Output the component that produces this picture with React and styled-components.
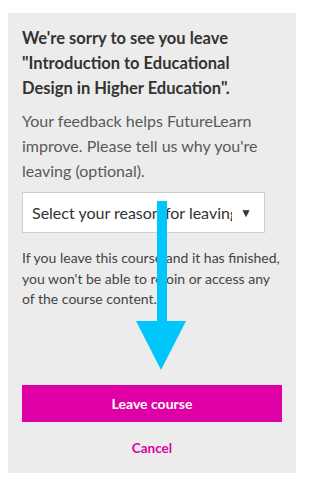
import React from "react";
import styled, { createGlobalStyle } from "styled-components";

const GlobalStyle = createGlobalStyle`
  body {
    margin: 0;
    background: #ffffff;
    font-family: "Lato", "Open Sans", sans-serif;
  }
`;

const Page = styled.div`
  width: 302px;
  box-sizing: border-box;
  padding: 13px 6px 14px 8px;
  position: relative;
`;

const Panel = styled.div`
  background: #ececec;
  width: 288px;
  height: 460px;
  box-sizing: border-box;
  padding: 13px 14px 0 14px;
  display: flex;
  flex-direction: column;
`;

const Title = styled.h2`
  margin: 0;
  max-width: 238px;
  font-size: 16.5px;
  line-height: 25px;
  font-weight: 700;
  color: #333333;
`;

const Intro = styled.p`
  margin: 7px 0 0;
  font-size: 16px;
  line-height: 25px;
  color: #5a5a5a;
`;

const SelectBox = styled.div`
  margin-top: 9px;
  width: 243px;
  height: 41px;
  box-sizing: border-box;
  border: 1px solid #cfcfcf;
  background: #ffffff;
  display: flex;
  align-items: center;
  padding: 0 12px 0 9px;
  gap: 8px;
`;

const SelectText = styled.span`
  flex: 1;
  overflow: hidden;
  white-space: nowrap;
  font-size: 16px;
  color: #333333;
`;

const Caret = styled.span`
  font-size: 12px;
  color: #333333;
`;

const Note = styled.p`
  margin: 15px 0 0;
  font-size: 14px;
  line-height: 20.5px;
  color: #444444;
`;

const LeaveButton = styled.button`
  margin-top: auto;
  width: 260px;
  height: 37px;
  border: none;
  background: #de00a5;
  color: #ffffff;
  font-family: inherit;
  font-size: 14px;
  font-weight: 700;
  cursor: pointer;
`;

const CancelLink = styled.a`
  display: block;
  width: 260px;
  text-align: center;
  margin: 18px 0 17px;
  font-size: 13.5px;
  line-height: 16px;
  font-weight: 700;
  color: #de00a5;
  cursor: pointer;
`;

const Arrow = styled.svg`
  position: absolute;
  left: 136px;
  top: 201px;
`;

export default function App() {
  return (
    <>
      <GlobalStyle />
      <Page>
        <Panel>
          <Title>
            We're sorry to see you leave "Introduction to Educational Design in
            Higher Education".
          </Title>
          <Intro>
            Your feedback helps FutureLearn improve. Please tell us why you're
            leaving (optional).
          </Intro>
          <SelectBox>
            <SelectText>Select your reason for leaving</SelectText>
            <Caret>▼</Caret>
          </SelectBox>
          <Note>
            If you leave this course and it has finished, you won't be able to
            rejoin or access any of the course content.
          </Note>
          <LeaveButton>Leave course</LeaveButton>
          <CancelLink>Cancel</CancelLink>
        </Panel>
        <Arrow width="50" height="170" viewBox="0 0 50 170">
          <rect x="21" y="0" width="10" height="122" fill="#00c6fb" />
          <polygon points="0,120 50,120 25,169" fill="#00c6fb" />
        </Arrow>
      </Page>
    </>
  );
}
